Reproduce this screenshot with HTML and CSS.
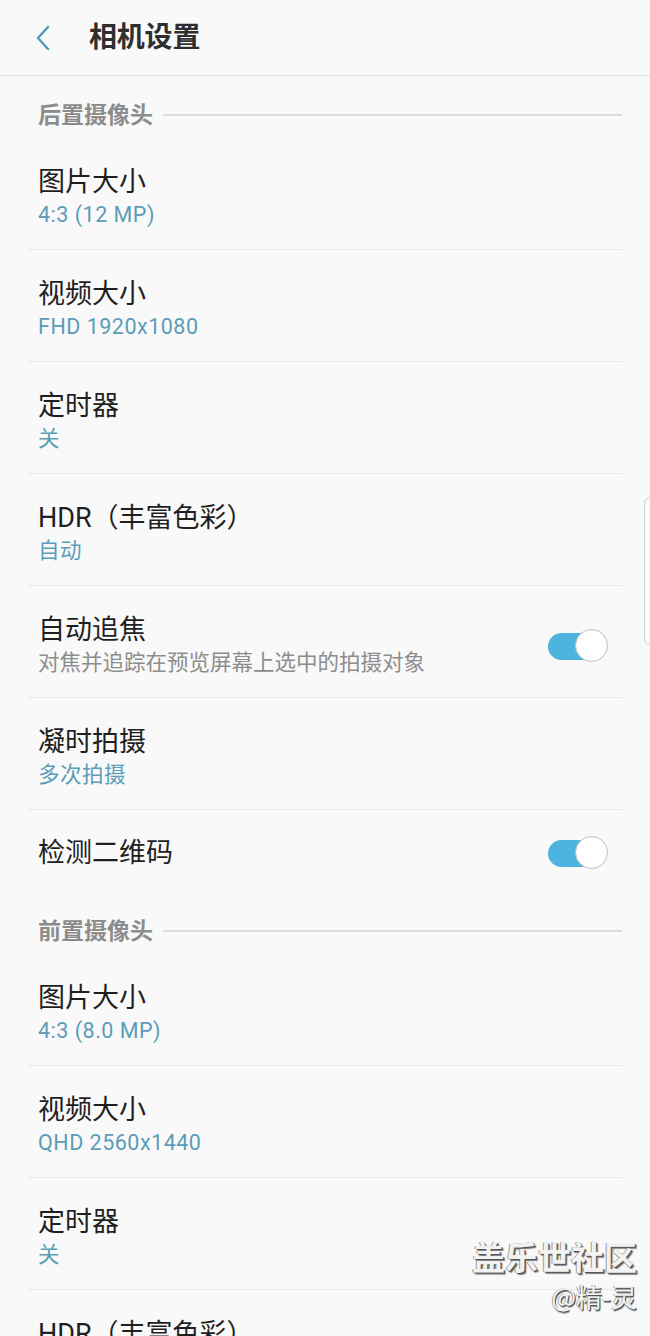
FILE: index.html
```html
<!DOCTYPE html>
<html lang="zh-CN">
<head>
<meta charset="utf-8">
<title>相机设置</title>
<link rel="stylesheet" href="styles.css">
</head>
<body>
<div class="page">
  <header class="appbar">
    <svg class="back" width="16" height="26" viewBox="0 0 16 26"><path d="M13 2 L3 13 L13 24" fill="none" stroke="#4a9ab8" stroke-width="2.4" stroke-linecap="round" stroke-linejoin="round"/></svg>
    <h1 class="title">相机设置</h1>
  </header>

  <div class="section"><span class="section-label">后置摄像头</span><span class="section-line"></span></div>
  <div class="row"><div class="row-main"><div class="row-title">图片大小</div><div class="row-value">4:3 (12 MP)</div></div></div>
  <div class="row"><div class="row-main"><div class="row-title">视频大小</div><div class="row-value">FHD 1920x1080</div></div></div>
  <div class="row"><div class="row-main"><div class="row-title">定时器</div><div class="row-value">关</div></div></div>
  <div class="row"><div class="row-main"><div class="row-title">HDR（丰富色彩）</div><div class="row-value">自动</div></div></div>
  <div class="row"><div class="row-main"><div class="row-title">自动追焦</div><div class="row-desc">对焦并追踪在预览屏幕上选中的拍摄对象</div></div><span class="switch on"><span class="knob"></span></span></div>
  <div class="row"><div class="row-main"><div class="row-title">凝时拍摄</div><div class="row-value">多次拍摄</div></div></div>
  <div class="row single last"><div class="row-main"><div class="row-title">检测二维码</div></div><span class="switch on"><span class="knob"></span></span></div>

  <div class="section second"><span class="section-label">前置摄像头</span><span class="section-line"></span></div>
  <div class="row"><div class="row-main"><div class="row-title">图片大小</div><div class="row-value">4:3 (8.0 MP)</div></div></div>
  <div class="row"><div class="row-main"><div class="row-title">视频大小</div><div class="row-value">QHD 2560x1440</div></div></div>
  <div class="row"><div class="row-main"><div class="row-title">定时器</div><div class="row-value">关</div></div></div>
  <div class="row"><div class="row-main"><div class="row-title">HDR（丰富色彩）</div><div class="row-value">自动</div></div></div>

  <div class="edge-handle"></div>
  <div class="watermark">
    <div class="wm-main">盖乐世社区</div>
    <div class="wm-sub">@精-灵</div>
  </div>
</div>
</body>
</html>
```

FILE: styles.css
```css
html, body {
  margin: 0;
  padding: 0;
  background: #f9f9f9;
}
body {
  font-family: Roboto, "Noto Sans CJK SC", sans-serif;
  color: #222;
  overflow: hidden;
}
.page {
  position: relative;
  width: 650px;
  height: 1336px;
  overflow: hidden;
  background: #f9f9f9;
}
.appbar {
  height: 76px;
  box-sizing: border-box;
  border-bottom: 1px solid #e2e2e2;
  display: flex;
  align-items: center;
  padding-left: 35px;
}
.back {
  display: block;
}
.title {
  margin: 0 0 0 38px;
  font-size: 28px;
  font-weight: 700;
  color: #2e2e2e;
  line-height: 34px;
  letter-spacing: -0.2px;
}
.section {
  height: 62px;
  box-sizing: border-box;
  padding: 26px 28px 0 38px;
  display: flex;
  align-items: flex-start;
}
.section.second {
  height: 63px;
  padding-top: 27px;
}
.section-label {
  font-size: 23px;
  line-height: 28px;
  font-weight: 700;
  color: #8c8c8c;
}
.section-line {
  flex: 1;
  height: 2px;
  background: #dcdcdc;
  margin: 12px 0 0 10px;
}
.row {
  margin: 0 28px 0 29px;
  padding: 27px 0 18px 9px;
  border-bottom: 1px solid #e8e8e8;
  display: flex;
  align-items: center;
}
.row.single {
  padding-top: 26px;
  padding-bottom: 21px;
}
.row.last {
  border-bottom: none;
}
.row-main {
  flex: 1;
  min-width: 0;
}
.row-title {
  font-size: 27px;
  line-height: 34px;
  color: #1f1f1f;
}
.row-value {
  font-size: 21.5px;
  line-height: 32px;
  letter-spacing: 0.5px;
  color: #5b9db8;
}
.row-desc {
  font-size: 21.5px;
  line-height: 32px;
  color: #8d8d8d;
}
.switch {
  position: relative;
  width: 60px;
  height: 34px;
  margin-right: 14px;
  flex: none;
}
.switch::before {
  content: "";
  position: absolute;
  left: 0;
  top: 4px;
  width: 52px;
  height: 27px;
  border-radius: 14px;
  background: #4db4e0;
}
.knob {
  position: absolute;
  right: 0;
  top: 0;
  width: 31px;
  height: 31px;
  border-radius: 50%;
  background: #fff;
  border: 1.5px solid #bdbdbd;
}
.edge-handle {
  position: absolute;
  left: 644px;
  top: 497px;
  width: 14px;
  height: 148px;
  box-sizing: border-box;
  border: 1px solid #cfcfcf;
  border-radius: 6px;
  background: #fbfbfb;
}
.watermark {
  position: absolute;
  right: 13px;
  top: 1234px;
  text-align: right;
  font-family: "Noto Sans CJK SC", sans-serif;
}
.wm-main {
  font-size: 33px;
  line-height: 44px;
  font-weight: 700;
  color: #f2f2f2;
  text-shadow: 1px 1px 0 #555, 2px 2px 1px #777, -1px 0 0 #999;
}
.wm-sub {
  font-size: 26px;
  line-height: 36px;
  color: #f4f4f4;
  text-shadow: 1px 1px 0 #555, 1px 2px 1px #888, -1px 0 0 #aaa;
}
```
